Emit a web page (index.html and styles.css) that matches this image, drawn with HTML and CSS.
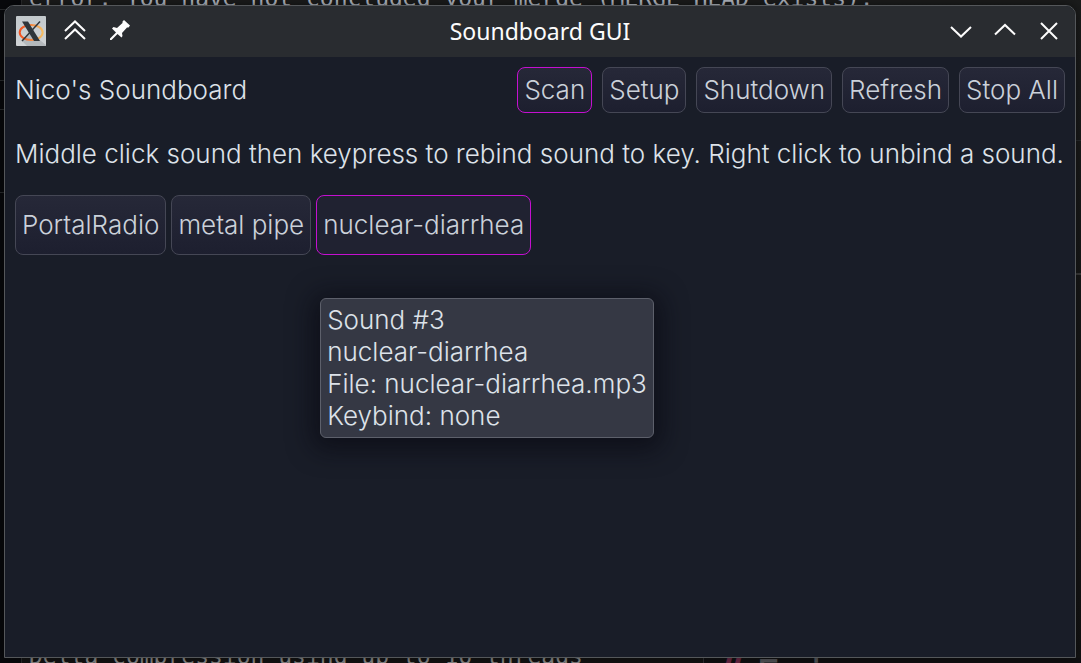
FILE: index.html
```html
<!DOCTYPE html>
<html lang="en">
<head>
<meta charset="utf-8">
<title>Soundboard GUI</title>
<link rel="stylesheet" href="styles.css">
</head>
<body>
<div class="terminal" aria-hidden="true">
  <span class="gutter"></span>
  <span class="tick tick-a"></span>
  <span class="tick tick-b"></span>
  <span class="tick tick-c"></span>
  <span class="tick tick-d"></span>
  <span class="tick tick-e"></span>
  <span class="tick tick-f"></span>
  <span class="line line-top">error: You have not concluded your merge (MERGE_HEAD exists).</span>
  <span class="line line-bottom">Delta compression using up to 16 threads</span>
  <span class="divider"></span>
  <span class="heading"><b>#</b><span>Fair</span></span>
</div>
<div class="window">
  <header class="titlebar">
    <div class="title-side">
      <svg class="app-icon" width="32" height="32" viewBox="0 0 32 32">
        <defs>
          <linearGradient id="tile" x1="0" y1="0" x2="0" y2="1"><stop offset="0" stop-color="#c3c9cc"/><stop offset="1" stop-color="#d0d3d5"/></linearGradient>
          <linearGradient id="ring" x1="0" y1="0" x2="1" y2="0"><stop offset="0" stop-color="#f4511e"/><stop offset="1" stop-color="#f5bd62"/></linearGradient>
        </defs>
        <rect x="1" y="1" width="30" height="30" rx="1" fill="url(#tile)"/>
        <path d="M7 26L16 18L31 30V31H12z" fill="#b4b9bc"/>
        <ellipse cx="16.200" cy="17.500" rx="11.500" ry="7.500" fill="none" stroke="url(#ring)" stroke-width="2"/>
        <path d="M25 6.500L7 26" stroke="#30363a" stroke-width="1.500"/>
        <path d="M7 6.500h6l12 19.500h-6z" fill="#30363a"/>
      </svg>
      <button class="title-button" aria-label="Shade"><svg width="24" height="24" viewBox="0 0 24 24"><path d="M2 12L12 2.500L22 12M2 20L12 10.500L22 20"/></svg></button>
      <button class="title-button" aria-label="Keep above"><svg width="24" height="24" viewBox="0 0 24 24"><path class="solid" d="M16 1L22 6.500L20.500 8.500L19 8.500L14 14L14.500 17L13.500 18.500L9.500 15L3.500 21L2 21L2 19.500L8 13.500L4 9.500L5.500 8L9 9L14.500 4L14.500 2.500z"/></svg></button>
    </div>
    <h1 class="title">Soundboard GUI</h1>
    <div class="title-side title-side-end">
      <button class="title-button" aria-label="Minimize"><svg width="24" height="24" viewBox="0 0 24 24"><path d="M2 8L12 17.500L22 8"/></svg></button>
      <button class="title-button" aria-label="Maximize"><svg width="24" height="24" viewBox="0 0 24 24"><path d="M2 15.500L12 6L22 15.500"/></svg></button>
      <button class="title-button" aria-label="Close"><svg width="24" height="24" viewBox="0 0 24 24"><path d="M4 4L20 20M20 4L4 20"/></svg></button>
    </div>
  </header>
  <main class="content">
    <div class="toolbar">
      <h2 class="name">Nico's Soundboard</h2>
      <button class="button active">Scan</button>
      <button class="button">Setup</button>
      <button class="button">Shutdown</button>
      <button class="button">Refresh</button>
      <button class="button">Stop All</button>
    </div>
    <p class="hint">Middle click sound then keypress to rebind sound to key. Right click to unbind a sound.</p>
    <div class="sounds">
      <button class="button sound">PortalRadio</button>
      <button class="button sound">metal pipe</button>
      <div class="anchor">
        <button class="button sound active hovered" aria-describedby="tip">nuclear-diarrhea</button>
        <div class="tooltip" id="tip" role="tooltip">Sound #3<br>nuclear-diarrhea<br>File: nuclear-diarrhea.mp3<br>Keybind: none</div>
      </div>
    </div>
  </main>
</div>
</body>
</html>
```
FILE: styles.css
```css
* {
  box-sizing: border-box;
}

body {
  margin: 0;
  height: 100vh;
  padding: 5px 5px 5px 4px;
  display: flex;
  overflow: hidden;
  background: #131313;
  color: #dde2e9;
  font: 300 26px/32px Inter, "Noto Sans", sans-serif;
}

.terminal {
  position: absolute;
  inset: 0;
  overflow: hidden;
  background: linear-gradient(#1b1c1c, #131313);
  color: #8d8d8d;
  font: 23px/28px "DejaVu Sans Mono", monospace;
  white-space: pre;
}

.gutter {
  position: absolute;
  inset: 0 auto 0 0;
  width: 22px;
  background: #08090c;
  border-right: 1px solid #2b2c2e;
}

.tick {
  position: absolute;
  height: 1px;
  width: 5px;
  left: 0;
  background: #292c2e;
}

.tick-a { top: 9px; width: 21px; }
.tick-b { top: 80px; }
.tick-c { top: 109px; }
.tick-d { top: 192px; }
.tick-e { top: 273px; left: auto; right: 0; height: 2px; background: #3b3b3b; }
.tick-f { top: 140px; left: auto; right: 0; }

.line {
  position: absolute;
  left: 29px;
}

.line-top { top: -16px; color: #b4bac3; }
.line-bottom { bottom: -7px; }

.divider {
  position: absolute;
  left: 703px;
  right: 0;
  bottom: 0;
  height: 5px;
  background: #101012;
  border-left: 1px solid #303034;
}

.heading {
  position: absolute;
  left: 717px;
  bottom: -34px;
  display: flex;
  align-items: baseline;
  gap: 12px;
  font: 40px/44px "DejaVu Sans Mono", monospace;
  color: #55565a;
}

.heading b {
  font-size: 44px;
  color: #6e2846;
}

.heading span {
  font-size: 40px;
}

.window {
  position: relative;
  flex: 1;
  display: flex;
  flex-direction: column;
  border: 1px solid #54575a;
  border-radius: 10px 10px 0 0;
  overflow: hidden;
  background: #191d28;
  box-shadow: 0 0 12px rgba(0, 0, 0, 0.5);
}

.titlebar {
  display: grid;
  grid-template-columns: 1fr auto 1fr;
  align-items: center;
  height: 51px;
  padding: 0 10px 1px;
  background: #292c30;
}

.title {
  margin: 0;
  color: #fcfcfc;
  font: 23px/32px "Noto Sans", sans-serif;
}

.title-side {
  display: flex;
  align-items: center;
  gap: 16px;
}

.title-side-end {
  justify-content: flex-end;
  gap: 20px;
  padding-right: 4px;
}

.app-icon + .title-button {
  margin-right: 5px;
}

.title-button {
  display: flex;
  padding: 0;
  border: 0;
  background: none;
}

.title-button path {
  fill: none;
  stroke: #fcfcfc;
  stroke-width: 2;
}

.title-button .solid {
  fill: #fcfcfc;
  stroke: none;
}

.content {
  padding: 10px;
}

.toolbar {
  display: flex;
  align-items: center;
  gap: 10px;
}

.name {
  margin: 0 auto 0 0;
  font: inherit;
}

.button {
  height: 46px;
  padding: 0 6px;
  border: 1px solid #454755;
  border-radius: 8px;
  background: linear-gradient(#262838, #1d1f2f);
  color: #cbd1da;
  font: inherit;
  white-space: nowrap;
}

.button.active {
  border-color: #c410d0;
}

.button.hovered {
  background: #202231;
}

.hint {
  margin: 25px 0;
  white-space: nowrap;
}

.sounds {
  display: flex;
  gap: 5px;
}

.sound {
  height: 60px;
}

.anchor {
  position: relative;
}

.tooltip {
  position: absolute;
  top: 103px;
  left: 4px;
  padding: 5px 6px;
  border: 1px solid #5d606b;
  border-radius: 6px;
  background: #353844;
  box-shadow: 0 4px 24px 8px rgba(8, 8, 16, 0.6);
  white-space: nowrap;
}
```
